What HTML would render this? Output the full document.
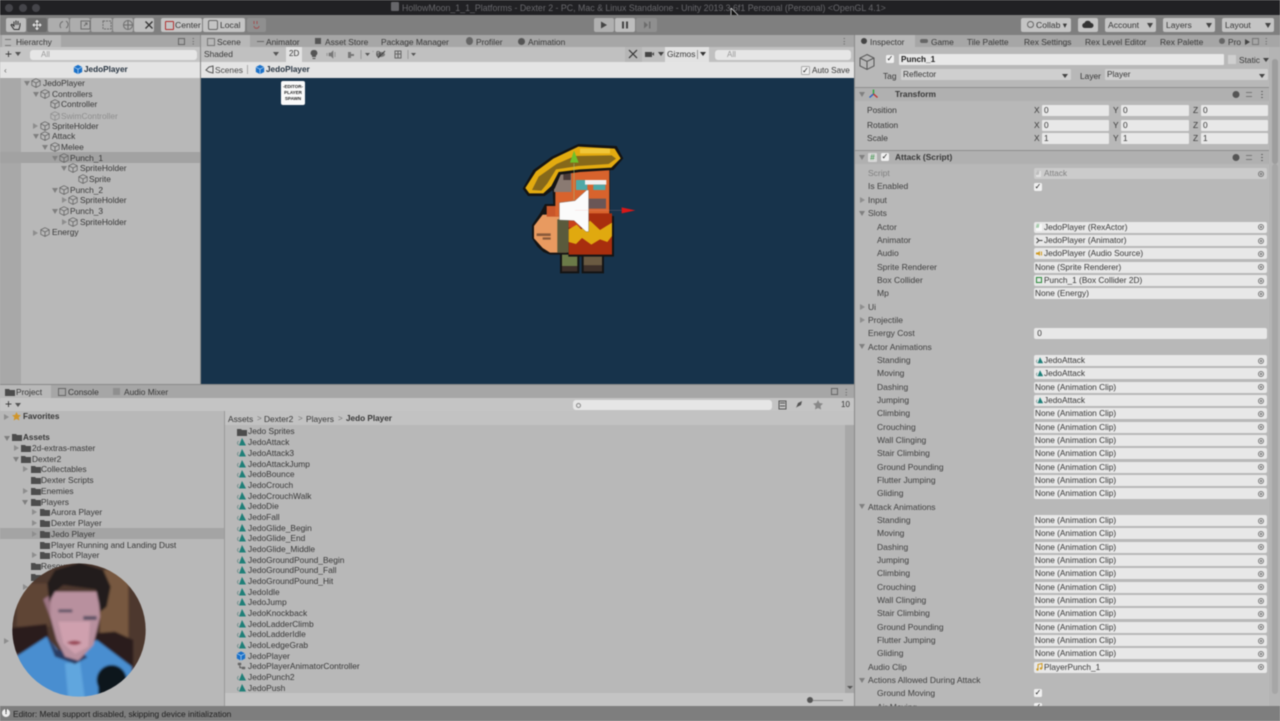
<!DOCTYPE html>
<html><head><meta charset="utf-8"><title>Unity</title>
<style>
html,body{margin:0;padding:0;background:#b8b8b8}
#p{position:relative;width:1280px;height:721px;overflow:hidden;background:#b8b8b8;font-family:"Liberation Sans",sans-serif;font-size:8.4px;color:#383838;filter:blur(.4px)}
#p div,#p span,#p svg{position:absolute}
.t{white-space:nowrap;line-height:12px;height:12px}
.b{background:#c4c4c4;border-radius:2px;height:14px;top:18px;line-height:14px;text-align:center;font-size:8.6px;color:#383838}
.tab{top:36px;line-height:12px;white-space:nowrap;font-size:8.4px;color:#383838}
.r{left:855px;width:415px;height:13px}
.r>span{left:22px;top:0;line-height:13px;white-space:nowrap;font-size:8.5px;color:#3f3f3f}
.r>span.h{left:13px}
.r>i{position:absolute;left:179px;top:1px;width:233px;height:11px;background:#e8e8e8;border-radius:2px;font-style:normal;font-size:8.3px;line-height:11px;padding-left:1px;box-sizing:border-box;white-space:nowrap;color:#383838}
.r>i.o::after{content:"";position:absolute;right:3px;top:2.5px;width:4px;height:4px;border:1px solid #777;border-radius:50%;background:radial-gradient(circle,#777 35%,transparent 45%)}
.r>i.s{padding-left:10px}
.inp{background:#e8e8e8;height:11px;border-radius:1px;line-height:11px;font-size:8.3px;padding-left:2px;box-sizing:border-box}
.ck{width:8px;height:8px;background:#f0f0f0;border-radius:1.5px;font-size:8px;line-height:8px;text-align:center;color:#222}
.tri{width:0;height:0;border-left:3px solid transparent;border-right:3px solid transparent;border-top:5px solid #808080}
.trr{width:0;height:0;border-top:3px solid transparent;border-bottom:3px solid transparent;border-left:5px solid #8e8e8e}
.bd{font-weight:bold;font-size:8.2px}
</style></head><body><div id="p">
<svg width="0" height="0" style="left:0;top:0"><defs>
<symbol id="cube" viewBox="0 0 10 10"><path d="M5 .7 9.2 2.8V7.3L5 9.4.8 7.3V2.8ZM.8 2.8 5 5l4.2-2.2M5 5V9.4" fill="none" stroke="#666" stroke-width=".8"/></symbol>
<symbol id="fo" viewBox="0 0 10 8"><path d="M0 1h4l1 1h5v6H0Z" fill="#4c4c4c"/></symbol>
<symbol id="an" viewBox="0 0 10 8"><path d="M5 0l4 7.500H2Z" fill="#1f7f78"/><path d="M1.500 3 .2 5l1.300 2" fill="none" stroke="#6a8a88" stroke-width=".8"/></symbol>
<symbol id="bl" viewBox="0 0 12 12"><path d="M6 .5 11 3v6L6 11.500 1 9V3Z" fill="#1a70c8"/><path d="M1 3l5 2.600L11 3M6 5.600v5.900" fill="none" stroke="#c8e0f6" stroke-width=".8"/></symbol>
</defs></svg>

<!-- title bar -->
<div style="left:0;top:0;width:1280px;height:15px;background:#212124"></div>
<div style="left:5px;top:4px;width:8px;height:8px;border-radius:50%;background:#45454a"></div>
<div style="left:19px;top:4px;width:8px;height:8px;border-radius:50%;background:#45454a"></div>
<div style="left:32px;top:4px;width:8px;height:8px;border-radius:50%;background:#45454a"></div>
<div class="t" style="left:391px;top:2px;width:8px;height:9px;background:#66666a;border-radius:1px"></div>
<div class="t" style="left:402px;top:2px;font-size:8.800px;color:#68686c">HollowMoon_1_1_Platforms - Dexter 2 - PC, Mac &amp; Linux Standalone - Unity 2019.3.6f1 Personal (Personal) &lt;OpenGL 4.1&gt;</div>
<svg style="left:730px;top:8px" width="10" height="13" viewBox="0 0 10 13"><path d="M1 0v10l2.500-2 1.600 4 1.700-.7-1.600-3.800H8.500Z" fill="#111" stroke="#eee" stroke-width=".7"/></svg>

<!-- toolbar -->
<div style="left:0;top:15px;width:1280px;height:20px;background:#7f7f7f"></div>
<div class="b" style="left:6px;width:20px;background:#bdbdbd"></div>
<div class="b" style="left:27px;width:20px;background:#6a6a6a"></div>
<div class="b" style="left:48px;width:21px;background:#adadad"></div>
<div class="b" style="left:70px;width:20px;background:#adadad"></div>
<div class="b" style="left:91px;width:21px;background:#adadad"></div>
<div class="b" style="left:113px;width:20px;background:#adadad"></div>
<div class="b" style="left:134px;width:20px;background:#bdbdbd"></div>
<svg style="left:6px;top:18px" width="148" height="14" viewBox="0 0 148 14" fill="none" stroke="#333" stroke-width="1"><path d="M8 11.500 5 7l1-.7 2 1.700V3.500M10 7V2.500M12 7V3M14 7.500V5M8 11.500h5l1-4" stroke="#333"/><path d="M31 3v8m-4-4h8m-5.500-3L31 2.500 32.500 4M29.500 10 31 11.500 32.500 10M28.500 5.500 27 7l1.500 1.500M33.500 5.500 35 7l-1.500 1.500" stroke="#e6e6e6"/><path d="M57 3.500a4 4 0 0 0-2 6.500m5-7a4 4 0 0 1 0 7" stroke="#6e6e6e"/><path d="M75 3h9v8h-9ZM78 8l3-3m-2 0h2v2" stroke="#6e6e6e"/><path d="M97 3h8v8h-8Z" stroke="#6e6e6e" stroke-dasharray="2 1"/><circle cx="122" cy="7" r="4.500" stroke="#6e6e6e"/><path d="M117.500 7h9M122 2.500v9" stroke="#6e6e6e"/><path d="M139.500 3.500l7 7m0-7-7 7" stroke-width="1.300"/></svg>
<div class="b" style="left:161px;width:41px;text-align:left;padding-left:14px;box-sizing:border-box">Center</div>
<div class="b" style="left:203px;width:42px;text-align:left;padding-left:17px;box-sizing:border-box">Local</div>
<div style="left:165px;top:21px;width:7px;height:7px;border:1px solid #b03030;border-radius:1px"></div>
<div style="left:208px;top:20px;width:8px;height:8px;border:1px solid #666;border-radius:2px"></div>
<div class="b" style="left:247px;width:19px;background:#8f8f8f"></div>
<svg style="left:252px;top:20px" width="10" height="10" viewBox="0 0 10 10"><path d="M2 1v3m3-3v3M2 6c0 3 5 3 5 0" fill="none" stroke="#a05050"/></svg>
<div class="b" style="left:594px;width:20px;background:#b0b0b0"></div>
<div class="b" style="left:615px;width:20px;background:#bdbdbd"></div>
<div class="b" style="left:636px;width:21px;background:#8f8f8f"></div>
<svg style="left:594px;top:18px" width="63" height="14" viewBox="0 0 63 14"><path d="M7 3.500 13 7 7 10.500Z" fill="#444"/><path d="M28 3.500h2v7h-2ZM32 3.500h2v7h-2Z" fill="#444"/><path d="M50 3.500 54 7l-4 3.500ZM55 3.500h1.500v7H55Z" fill="#6c6c6c"/></svg>
<div class="b" style="left:1021px;width:50px;text-align:left;padding-left:15px;box-sizing:border-box">Collab ▾</div>
<div style="left:1027px;top:21px;width:5px;height:5px;border:1.500px solid #666;border-radius:50%"></div>
<div class="b" style="left:1078px;width:20px"></div>
<svg style="left:1082px;top:20px" width="12" height="9" viewBox="0 0 12 9"><path d="M3 8a2.500 2.500 0 0 1-.5-5 3.500 3.500 0 0 1 6.500 0 2.500 2.500 0 0 1 0 5Z" fill="#333"/></svg>
<div class="b" style="left:1105px;width:51px;text-align:left;padding-left:3px;box-sizing:border-box">Account</div>
<div class="b" style="left:1163px;width:52px;text-align:left;padding-left:3px;box-sizing:border-box">Layers</div>
<div class="b" style="left:1222px;width:52px;text-align:left;padding-left:3px;box-sizing:border-box">Layout</div>
<div class="tri" style="left:1147px;top:23px;border-top-color:#444"></div>
<div class="tri" style="left:1206px;top:23px;border-top-color:#444"></div>
<div class="tri" style="left:1265px;top:23px;border-top-color:#444"></div>

<!-- hierarchy -->
<div style="left:0;top:35px;width:200px;height:12px;background:#a6a6a6"></div>
<div style="left:2px;top:35px;width:59px;height:12px;background:#b8b8b8"></div>
<div class="tab" style="left:16px;top:36px">Hierarchy</div>
<div style="left:5px;top:39px;width:6px;height:5px;border-top:1px solid #777;border-bottom:1px solid #777"></div>
<div style="left:178px;top:38px;width:5px;height:5px;border:1px solid #666"></div>
<div class="t" style="left:189px;top:35px;color:#555">⋮</div>
<div style="left:0;top:47px;width:200px;height:15px;background:#c4c4c4"></div>
<div class="t" style="left:5px;top:48px;font-size:12px;color:#333">+</div>
<div class="tri" style="left:15px;top:52px;border-top-width:4px;border-top-color:#555"></div>
<div style="left:30px;top:50px;width:167px;height:10px;background:#e6e6e6;border-radius:3px"></div>
<div class="t" style="left:41px;top:49px;font-size:8px;color:#999">All</div>
<div style="left:0;top:62px;width:200px;height:16px;background:#e4e4e4"></div>
<div class="t" style="left:4px;top:64px;color:#666">‹</div>
<svg style="left:73px;top:64px" width="10" height="11"><use href="#bl"/></svg>
<div class="t bd" style="left:84px;top:64px;color:#263340">JedoPlayer</div>
<div style="left:0;top:78px;width:21px;height:306px;background:#a8a8a8"></div>
<div style="left:0;top:152px;width:200px;height:11px;background:#a2a2a2"></div>

<div class="t" style="left:43px;top:77px">JedoPlayer</div>
<div class="t" style="left:52px;top:88px">Controllers</div>
<div class="t" style="left:61px;top:98px">Controller</div>
<div class="t" style="left:61px;top:110px;color:#8e8e8e">SwimController</div>
<div class="t" style="left:52px;top:120px">SpriteHolder</div>
<div class="t" style="left:52px;top:130px">Attack</div>
<div class="t" style="left:61px;top:141px">Melee</div>
<div class="t" style="left:70px;top:152px">Punch_1</div>
<div class="t" style="left:80px;top:162px">SpriteHolder</div>
<div class="t" style="left:89px;top:173px">Sprite</div>
<div class="t" style="left:70px;top:184px">Punch_2</div>
<div class="t" style="left:80px;top:194px">SpriteHolder</div>
<div class="t" style="left:70px;top:205px">Punch_3</div>
<div class="t" style="left:80px;top:216px">SpriteHolder</div>
<div class="t" style="left:52px;top:226px">Energy</div>

<svg style="left:31px;top:78px" width="10" height="10"><use href="#cube"/></svg>
<svg style="left:40px;top:89px" width="10" height="10"><use href="#cube"/></svg>
<svg style="left:50px;top:99px" width="10" height="10"><use href="#cube"/></svg>
<svg style="left:50px;top:111px;opacity:.5" width="10" height="10"><use href="#cube"/></svg>
<svg style="left:40px;top:121px" width="10" height="10"><use href="#cube"/></svg>
<svg style="left:40px;top:131px" width="10" height="10"><use href="#cube"/></svg>
<svg style="left:50px;top:142px" width="10" height="10"><use href="#cube"/></svg>
<svg style="left:59px;top:153px" width="10" height="10"><use href="#cube"/></svg>
<svg style="left:68px;top:163px" width="10" height="10"><use href="#cube"/></svg>
<svg style="left:78px;top:174px" width="10" height="10"><use href="#cube"/></svg>
<svg style="left:59px;top:185px" width="10" height="10"><use href="#cube"/></svg>
<svg style="left:68px;top:195px" width="10" height="10"><use href="#cube"/></svg>
<svg style="left:59px;top:206px" width="10" height="10"><use href="#cube"/></svg>
<svg style="left:68px;top:217px" width="10" height="10"><use href="#cube"/></svg>
<svg style="left:40px;top:227px" width="10" height="10"><use href="#cube"/></svg>

<div class="tri" style="left:24px;top:81px"></div>
<div class="tri" style="left:33px;top:92px"></div>
<div class="trr" style="left:33px;top:123px"></div>
<div class="tri" style="left:33px;top:134px"></div>
<div class="tri" style="left:42px;top:145px"></div>
<div class="tri" style="left:52px;top:156px"></div>
<div class="tri" style="left:61px;top:166px"></div>
<div class="tri" style="left:52px;top:188px"></div>
<div class="trr" style="left:62px;top:197px"></div>
<div class="tri" style="left:52px;top:209px"></div>
<div class="trr" style="left:62px;top:219px"></div>
<div class="trr" style="left:33px;top:230px"></div>
<div style="left:200px;top:35px;width:1px;height:350px;background:#8a8a8a"></div>

<!-- scene -->
<div style="left:201px;top:35px;width:653px;height:12px;background:#a6a6a6"></div>
<div style="left:201px;top:35px;width:49px;height:12px;background:#b8b8b8"></div>
<div style="left:207px;top:38px;width:6px;height:6px;border:1px solid #777"></div>
<div class="tab" style="left:217px">Scene</div>
<div class="tab" style="left:266px">Animator</div>
<div style="left:257px;top:41px;width:7px;height:1px;background:#666"></div>
<div style="left:315px;top:38px;width:6px;height:6px;background:#555"></div>
<div class="tab" style="left:325px">Asset Store</div>
<div class="tab" style="left:381px">Package Manager</div>
<div style="left:466px;top:37px;width:7px;height:8px;background:#666;border-radius:50%"></div>
<div class="tab" style="left:476px">Profiler</div>
<div style="left:518px;top:38px;width:7px;height:7px;background:#555;border-radius:50%"></div>
<div class="tab" style="left:528px">Animation</div>
<div class="t" style="left:840px;top:35px;color:#555">⋮</div>
<div style="left:201px;top:47px;width:653px;height:15px;background:#c0c0c0"></div>
<div class="t" style="left:204px;top:48px">Shaded</div>
<div class="tri" style="left:273px;top:52px;border-top-width:4px;border-top-color:#555"></div>
<div style="left:286px;top:47px;width:16px;height:15px;background:#e2e2e2"></div>
<div class="t" style="left:289px;top:48px;font-size:8px">2D</div>
<svg style="left:308px;top:48px" width="120" height="13" viewBox="0 0 120 13"><path d="M6 2a3 3 0 0 1 2 5.500V9H4V7.500A3 3 0 0 1 6 2ZM4.500 10h3v1h-3Z" fill="#555"/><path d="M21 5h2l2-2v7l-2-2h-2ZM27 4v5M19 5v3" fill="#777" stroke="#777" stroke-width=".6"/><path d="M40 4h3v2h3v2h-3v2h-3Z" fill="#777"/><path d="M53 2v9" stroke="#999"/><path d="M57 5h5l-2.500 3Z" fill="#555"/><path d="M65 3v1m4-1v1" stroke="#999"/><ellipse cx="73" cy="6.500" rx="4" ry="2.500" fill="#777"/><path d="M70 10l7-7" stroke="#444"/><path d="M87 3h6v7h-6ZM87 6h6M90 3v7" fill="none" stroke="#666"/><path d="M100 2v9" stroke="#999"/><path d="M103 5h5l-2.500 3Z" fill="#555"/></svg>
<div class="t" style="left:376px;top:48px">0</div>
<div style="left:625px;top:47px;width:17px;height:15px;background:#b6b6b6"></div>
<svg style="left:628px;top:49px" width="10" height="10" viewBox="0 0 10 10"><path d="M1 1l8 8M9 1 1 9" stroke="#333" stroke-width="1.200"/></svg>
<div style="left:645px;top:52px;width:7px;height:5px;background:#444"></div>
<div style="left:652px;top:52px;width:0;height:0;border-top:2.500px solid transparent;border-bottom:2.500px solid transparent;border-right:2.500px solid #444"></div>
<div class="tri" style="left:658px;top:52px;border-top-width:4px;border-top-color:#444"></div>
<div style="left:665px;top:47px;width:44px;height:15px;background:#e2e2e2"></div>
<div class="t" style="left:667px;top:48px">Gizmos</div>
<div style="left:697px;top:50px;width:1px;height:9px;background:#999"></div>
<div class="tri" style="left:700px;top:52px;border-top-width:4px;border-top-color:#333"></div>
<div style="left:715px;top:50px;width:136px;height:10px;background:#e6e6e6;border-radius:3px"></div>
<div class="t" style="left:727px;top:49px;font-size:8px;color:#999">All</div>
<div style="left:201px;top:62px;width:653px;height:16px;background:#e4e4e4"></div>
<div class="t" style="left:215px;top:64px;color:#444">Scenes</div>
<svg style="left:205px;top:65px" width="9" height="9" viewBox="0 0 9 9"><path d="M1 5 4 2l4-1v7l-4-1Z" fill="none" stroke="#555"/></svg>
<div style="left:247px;top:65px;width:1px;height:9px;background:#aaa"></div>
<svg style="left:255px;top:64px" width="10" height="11"><use href="#bl"/></svg>
<div class="t bd" style="left:266px;top:64px;color:#263340">JedoPlayer</div>
<div class="ck" style="left:801px;top:66px;border:1px solid #aaa;box-sizing:border-box;width:9px;height:9px">✓</div>
<div class="t" style="left:812px;top:65px;font-size:8.200px">Auto Save</div>
<div style="left:201px;top:78px;width:653px;height:306px;background:#17334b"></div>
<div style="left:281px;top:81px;width:24px;height:24px;background:#fafafa;border-radius:2px"></div>
<div class="t" style="left:281px;top:84px;width:24px;text-align:center;font-size:4.500px;line-height:6px;height:18px;font-weight:bold;color:#222">-EDITOR-<br>PLAYER<br>SPAWN</div>

<!-- character -->
<svg style="left:500px;top:130px" width="150" height="150" viewBox="0 0 450 450">
<path d="M180 372V430H238V372ZM245 372V430H312V372Z" fill="#141414"/>
<path d="M186 372h46v36h-46Z" fill="#6b7a48"/>
<path d="M251 372h55v34h-55Z" fill="#6a5a42"/>
<path d="M186 408h46v16h-46ZM251 406h55v18h-55Z" fill="#3d302a"/>
<path d="M155 118H330V258H342V380H205V374H150L130 366 112 350 96 325V285L120 250 135 222H160Z" fill="#141414"/>
<path d="M102 288 128 254H200V368H150L128 354 102 325Z" fill="#e89a60"/>
<path d="M140 228h60v32h-60Z" fill="#c8562a"/>
<path d="M110 310h42v8h-42ZM128 322h24v7h-24Z" fill="#8a5a3a"/>
<path d="M172 268h34v100h-34Z" fill="#5a5a3c"/>
<path d="M166 120H328V258H166Z" fill="#d8632d"/>
<path d="M162 122h52v64h-52Z" fill="#8a7a72"/>
<path d="M190 115h22v35h-22Z" fill="#4a3a38"/>
<path d="M228 150h34v30h-34Z" fill="#4fa8a6"/>
<path d="M255 150h64v14h-64Z" fill="#f0f0f0"/>
<path d="M280 164h36v16h-36Z" fill="#4fa8a6"/>
<path d="M262 206h56v30h-56Z" fill="#6a5656"/>
<path d="M206 250h130v124H206Z" fill="#a82e0e"/>
<path d="M206 252h60v40h-60Z" fill="#c8401a"/>
<path d="M206 298l24-14 14 14 26-26 30 28 36-22v40l-14 18-22-8-26 16-28-20-18 18-22-6Z" fill="#e0a90f"/>
<path d="M68 176 100 120 155 80 235 42 350 48 370 85 340 120 240 126 182 134 164 176 134 198 84 198Z" fill="#141414"/>
<path d="M76 174 108 124 160 86 235 50 344 56 362 85 334 113 240 118 176 126 154 168 130 190 88 190Z" fill="#e3ab10"/>
<path d="M96 180 116 140 170 102 225 78 335 76 348 86 326 102 235 108 168 118 142 160 124 182Z" fill="#86681a"/>
<path d="M240 56h90v14h-90Z" fill="#f0c63a"/>
<path d="M222 100V210" stroke="#a0c080" stroke-width="1.500"/>
<path d="M222 62 210 98H236Z" fill="#6fc02a"/>
<path d="M178 218 225 212 260 180 266 180V305L258 305 222 272 178 270Z" fill="#fbfbfb" stroke="#555" stroke-width="1"/>
<path d="M225 241H365" stroke="#e8a0a0" stroke-width="1" opacity=".5"/>
<path d="M365 232 406 241 365 250Z" fill="#d81818"/>
</svg>

<!-- project -->
<div style="left:0;top:384px;width:854px;height:1px;background:#8a8a8a"></div>
<div style="left:0;top:385px;width:854px;height:13px;background:#a6a6a6"></div>
<div style="left:0;top:385px;width:51px;height:13px;background:#b8b8b8"></div>
<svg style="left:5px;top:388px" width="10" height="8"><use href="#fo"/></svg>
<div class="tab" style="left:16px;top:386px">Project</div>
<div style="left:58px;top:388px;width:6px;height:6px;border:1px solid #666"></div>
<div class="tab" style="left:68px;top:386px">Console</div>
<div style="left:113px;top:388px;width:7px;height:7px;background:#8f8f8f"></div>
<div class="tab" style="left:124px;top:386px">Audio Mixer</div>
<div style="left:831px;top:388px;width:5px;height:5px;border:1px solid #666"></div>
<div class="t" style="left:842px;top:386px;color:#555">⋮</div>
<div style="left:0;top:398px;width:854px;height:13px;background:#c4c4c4"></div>
<div class="t" style="left:5px;top:398px;font-size:12px;color:#333">+</div>
<div class="tri" style="left:15px;top:403px;border-top-width:4px;border-top-color:#555"></div>
<div style="left:573px;top:400px;width:199px;height:10px;background:#e6e6e6;border-radius:3px"></div>
<div style="left:576px;top:403px;width:3px;height:3px;border:1px solid #888;border-radius:50%"></div>
<svg style="left:778px;top:400px" width="72" height="10" viewBox="0 0 72 10"><path d="M1 1h7v8H1ZM2 3h5M2 6h5" fill="none" stroke="#555"/><path d="M18 8l2-5 4-2-1 4-4 2Z" fill="#555"/><path d="M40 0l1.500 3 3.500.5-2.500 2.500.6 3.500L40 8l-3 1.500.6-3.500L35 3.500 38.500 3Z" fill="#888"/></svg>
<div class="t" style="left:841px;top:399px;font-size:8px">10</div>

<div style="left:0;top:411px;width:225px;height:295px;background:#b8b8b8"></div>
<div style="left:224px;top:411px;width:1px;height:295px;background:#9a9a9a"></div>
<div style="left:225px;top:411px;width:629px;height:14px;background:#c2c2c2"></div>
<div class="t" style="left:228px;top:413px">Assets</div>
<div class="t" style="left:257px;top:413px;color:#777;font-size:8px">&gt;</div>
<div class="t" style="left:264px;top:413px">Dexter2</div>
<div class="t" style="left:298px;top:413px;color:#777;font-size:8px">&gt;</div>
<div class="t" style="left:306px;top:413px">Players</div>
<div class="t" style="left:338px;top:413px;color:#777;font-size:8px">&gt;</div>
<div class="t bd" style="left:346px;top:413px">Jedo Player</div>
<div style="left:0;top:528px;width:224px;height:11px;background:#a4a4a4"></div>

<div class="trr" style="left:4px;top:414px"></div>
<div class="t bd" style="left:23px;top:411px">Favorites</div>
<svg style="left:12px;top:412px" width="9" height="9" viewBox="0 0 10 10"><path d="M5 0l1.500 3.200 3.500.4-2.600 2.300.8 3.500L5 7.600 1.800 9.400l.8-3.500L0 3.600l3.500-.4Z" fill="#d0952a"/></svg>
<div class="tri" style="left:4px;top:436px"></div>
<svg style="left:12px;top:433px" width="10" height="8"><use href="#fo"/></svg>
<div class="t bd" style="left:23px;top:432px">Assets</div>
<div class="trr" style="left:14px;top:445px"></div>
<svg style="left:21px;top:444px" width="10" height="8"><use href="#fo"/></svg>
<div class="t" style="left:32px;top:442px">2d-extras-master</div>
<div class="tri" style="left:13px;top:457px"></div>
<svg style="left:21px;top:455px" width="10" height="8"><use href="#fo"/></svg>
<div class="t" style="left:32px;top:453px">Dexter2</div>
<div class="trr" style="left:23px;top:466px"></div>
<svg style="left:31px;top:465px" width="10" height="8"><use href="#fo"/></svg>
<div class="t" style="left:41px;top:463px">Collectables</div>
<svg style="left:31px;top:476px" width="10" height="8"><use href="#fo"/></svg>
<div class="t" style="left:41px;top:474px">Dexter Scripts</div>
<div class="trr" style="left:23px;top:488px"></div>
<svg style="left:31px;top:487px" width="10" height="8"><use href="#fo"/></svg>
<div class="t" style="left:41px;top:485px">Enemies</div>
<div class="tri" style="left:22px;top:500px"></div>
<svg style="left:31px;top:498px" width="10" height="8"><use href="#fo"/></svg>
<div class="t" style="left:41px;top:496px">Players</div>
<div class="trr" style="left:32px;top:509px"></div>
<svg style="left:40px;top:508px" width="10" height="8"><use href="#fo"/></svg>
<div class="t" style="left:51px;top:506px">Aurora Player</div>
<div class="trr" style="left:32px;top:520px"></div>
<svg style="left:40px;top:519px" width="10" height="8"><use href="#fo"/></svg>
<div class="t" style="left:51px;top:517px">Dexter Player</div>
<div class="trr" style="left:32px;top:531px"></div>
<svg style="left:40px;top:530px" width="10" height="8"><use href="#fo"/></svg>
<div class="t" style="left:51px;top:528px">Jedo Player</div>
<svg style="left:40px;top:541px" width="10" height="8"><use href="#fo"/></svg>
<div class="t" style="left:51px;top:539px">Player Running and Landing Dust</div>
<div class="trr" style="left:32px;top:552px"></div>
<svg style="left:40px;top:551px" width="10" height="8"><use href="#fo"/></svg>
<div class="t" style="left:51px;top:549px">Robot Player</div>
<svg style="left:31px;top:562px" width="10" height="8"><use href="#fo"/></svg>
<div class="t" style="left:41px;top:560px">Resources</div>
<svg style="left:31px;top:573px" width="10" height="8"><use href="#fo"/></svg>
<div class="trr" style="left:23px;top:584px"></div>
<div class="trr" style="left:4px;top:638px"></div>

<!-- project file list -->
<svg style="left:237px;top:428px" width="10" height="8"><use href="#fo"/></svg>
<div class="t" style="left:248px;top:425px">Jedo Sprites</div>
<svg style="left:237px;top:438px" width="10" height="8"><use href="#an"/></svg><div class="t" style="left:248px;top:436px">JedoAttack</div>
<svg style="left:237px;top:449px" width="10" height="8"><use href="#an"/></svg><div class="t" style="left:248px;top:447px">JedoAttack3</div>
<svg style="left:237px;top:460px" width="10" height="8"><use href="#an"/></svg><div class="t" style="left:248px;top:458px">JedoAttackJump</div>
<svg style="left:237px;top:470px" width="10" height="8"><use href="#an"/></svg><div class="t" style="left:248px;top:468px">JedoBounce</div>
<svg style="left:237px;top:481px" width="10" height="8"><use href="#an"/></svg><div class="t" style="left:248px;top:479px">JedoCrouch</div>
<svg style="left:237px;top:492px" width="10" height="8"><use href="#an"/></svg><div class="t" style="left:248px;top:490px">JedoCrouchWalk</div>
<svg style="left:237px;top:502px" width="10" height="8"><use href="#an"/></svg><div class="t" style="left:248px;top:500px">JedoDie</div>
<svg style="left:237px;top:513px" width="10" height="8"><use href="#an"/></svg><div class="t" style="left:248px;top:511px">JedoFall</div>
<svg style="left:237px;top:524px" width="10" height="8"><use href="#an"/></svg><div class="t" style="left:248px;top:522px">JedoGlide_Begin</div>
<svg style="left:237px;top:534px" width="10" height="8"><use href="#an"/></svg><div class="t" style="left:248px;top:532px">JedoGlide_End</div>
<svg style="left:237px;top:545px" width="10" height="8"><use href="#an"/></svg><div class="t" style="left:248px;top:543px">JedoGlide_Middle</div>
<svg style="left:237px;top:556px" width="10" height="8"><use href="#an"/></svg><div class="t" style="left:248px;top:554px">JedoGroundPound_Begin</div>
<svg style="left:237px;top:566px" width="10" height="8"><use href="#an"/></svg><div class="t" style="left:248px;top:564px">JedoGroundPound_Fall</div>
<svg style="left:237px;top:577px" width="10" height="8"><use href="#an"/></svg><div class="t" style="left:248px;top:575px">JedoGroundPound_Hit</div>
<svg style="left:237px;top:588px" width="10" height="8"><use href="#an"/></svg><div class="t" style="left:248px;top:586px">JedoIdle</div>
<svg style="left:237px;top:598px" width="10" height="8"><use href="#an"/></svg><div class="t" style="left:248px;top:596px">JedoJump</div>
<svg style="left:237px;top:609px" width="10" height="8"><use href="#an"/></svg><div class="t" style="left:248px;top:607px">JedoKnockback</div>
<svg style="left:237px;top:620px" width="10" height="8"><use href="#an"/></svg><div class="t" style="left:248px;top:618px">JedoLadderClimb</div>
<svg style="left:237px;top:630px" width="10" height="8"><use href="#an"/></svg><div class="t" style="left:248px;top:628px">JedoLadderIdle</div>
<svg style="left:237px;top:641px" width="10" height="8"><use href="#an"/></svg><div class="t" style="left:248px;top:639px">JedoLedgeGrab</div>
<svg style="left:236px;top:651px" width="10" height="10"><use href="#bl"/></svg><div class="t" style="left:248px;top:650px">JedoPlayer</div>
<svg style="left:237px;top:662px" width="9" height="8" viewBox="0 0 9 8"><path d="M1 1h3v2H1ZM5 5h3v2H5ZM2.500 3v3H5" fill="#666" stroke="#666" stroke-width=".5"/></svg><div class="t" style="left:248px;top:660px">JedoPlayerAnimatorController</div>
<svg style="left:237px;top:673px" width="10" height="8"><use href="#an"/></svg><div class="t" style="left:248px;top:671px">JedoPunch2</div>
<svg style="left:237px;top:684px" width="10" height="8"><use href="#an"/></svg><div class="t" style="left:248px;top:682px">JedoPush</div>
<div style="left:845px;top:425px;width:9px;height:268px;background:#a8a8a8"></div>
<div style="left:225px;top:693px;width:629px;height:13px;background:#c4c4c4"></div>
<div style="left:807px;top:697px;width:6px;height:6px;border-radius:50%;background:#555"></div>
<div style="left:813px;top:699.500px;width:30px;height:1px;background:#8a8a8a"></div>
<div class="tri" style="left:847px;top:686px;border-top-width:3px;border-top-color:#555"></div>

<!-- inspector -->
<div style="left:854px;top:35px;width:1px;height:671px;background:#8a8a8a"></div>
<div style="left:855px;top:35px;width:425px;height:12px;background:#a6a6a6"></div>
<div style="left:855px;top:35px;width:60px;height:12px;background:#b8b8b8"></div>
<div style="left:861px;top:38px;width:6px;height:6px;background:#444;border-radius:50%"></div>
<div class="tab" style="left:870px">Inspector</div>
<div style="left:920px;top:39px;width:8px;height:4px;background:#666;border-radius:2px"></div>
<div class="tab" style="left:931px">Game</div>
<div class="tab" style="left:967px">Tile Palette</div>
<div class="tab" style="left:1024px">Rex Settings</div>
<div class="tab" style="left:1085px">Rex Level Editor</div>
<div class="tab" style="left:1160px">Rex Palette</div>
<div style="left:1219px;top:38px;width:6px;height:6px;background:#666;border-radius:50%"></div>
<div class="tab" style="left:1228px">Pro</div>
<div class="trr" style="left:1245px;top:39px;border-left-color:#444"></div>
<div style="left:1252px;top:38px;width:5px;height:5px;border:1px solid #777"></div>
<div class="t" style="left:1262px;top:35px;color:#555">⋮</div>

<svg style="left:859px;top:53px" width="18" height="20" viewBox="0 0 18 20"><path d="M8 1.500 15 5v8l-7 3.500L1 13V5ZM1 5l7 3.500L15 5M8 8.500v8" fill="none" stroke="#555" stroke-width="1"/></svg>
<div class="ck" style="left:886px;top:55px">✓</div>
<div class="inp" style="left:899px;top:54px;width:325px;font-weight:bold;font-size:8.200px;color:#222">Punch_1</div>
<div style="left:1228px;top:55px;width:8px;height:9px;background:#cfcfcf"></div>
<div class="t" style="left:1239px;top:54px">Static</div>
<div class="tri" style="left:1263px;top:58px;border-top-width:4px;border-top-color:#444"></div>
<div class="t" style="left:883px;top:70px">Tag</div>
<div class="inp" style="left:901px;top:69px;width:170px;background:#cfcfcf">Reflector</div>
<div class="tri" style="left:1062px;top:74px;border-top-width:4px;border-top-color:#444"></div>
<div class="t" style="left:1080px;top:70px">Layer</div>
<div class="inp" style="left:1105px;top:69px;width:163px;background:#cfcfcf">Player</div>
<div class="tri" style="left:1259px;top:74px;border-top-width:4px;border-top-color:#444"></div>

<div style="left:855px;top:87px;width:414px;height:1px;background:#8f8f8f"></div>
<div style="left:855px;top:88px;width:414px;height:13px;background:#b0b0b0"></div>
<div class="tri" style="left:859px;top:92px"></div>
<svg style="left:868px;top:88px" width="11" height="12" viewBox="0 0 11 12"><path d="M5.500 6V1.500" stroke="#2aa53a" stroke-width="1.400"/><path d="M5.500 6 1.500 9.500" stroke="#2a60c0" stroke-width="1.400"/><path d="M5.500 6 9.500 9.500" stroke="#c03030" stroke-width="1.400"/></svg>
<div class="t bd" style="left:895px;top:88px;font-size:8.400px">Transform</div>

<div class="t" style="left:867px;top:104px">Position</div>
<div class="t" style="left:867px;top:119px">Rotation</div>
<div class="t" style="left:867px;top:132px">Scale</div>
<div class="t" style="left:1034px;top:104px">X</div><div class="inp" style="left:1042px;top:105px;width:67px">0</div>
<div class="t" style="left:1113px;top:104px">Y</div><div class="inp" style="left:1121px;top:105px;width:68px">0</div>
<div class="t" style="left:1193px;top:104px">Z</div><div class="inp" style="left:1201px;top:105px;width:67px">0</div>
<div class="t" style="left:1034px;top:119px">X</div><div class="inp" style="left:1042px;top:120px;width:67px">0</div>
<div class="t" style="left:1113px;top:119px">Y</div><div class="inp" style="left:1121px;top:120px;width:68px">0</div>
<div class="t" style="left:1193px;top:119px">Z</div><div class="inp" style="left:1201px;top:120px;width:67px">0</div>
<div class="t" style="left:1034px;top:132px">X</div><div class="inp" style="left:1042px;top:133px;width:67px">1</div>
<div class="t" style="left:1113px;top:132px">Y</div><div class="inp" style="left:1121px;top:133px;width:68px">1</div>
<div class="t" style="left:1193px;top:132px">Z</div><div class="inp" style="left:1201px;top:133px;width:67px">1</div>

<div style="left:855px;top:150px;width:414px;height:1px;background:#8f8f8f"></div>
<div style="left:855px;top:151px;width:414px;height:13px;background:#b0b0b0"></div>
<div class="tri" style="left:859px;top:155px"></div>
<div style="left:868px;top:153px;width:9px;height:9px;background:#d8d8d8;border-radius:1px;color:#2a8a3a;font-size:8px;line-height:9px;text-align:center">#</div>
<div class="ck" style="left:881px;top:153px">✓</div>
<div class="t bd" style="left:895px;top:151px;font-size:8.400px">Attack (Script)</div>
<svg style="left:1232px;top:90px" width="36" height="9" viewBox="0 0 36 9"><circle cx="4" cy="4.500" r="3.500" fill="#555"/><path d="M14 2.500h6M14 6.500h6" stroke="#777"/><path d="M30 1v1m0 2v1m0 2v1" stroke="#555" stroke-width="1.400"/></svg>
<svg style="left:1232px;top:153px" width="36" height="9" viewBox="0 0 36 9"><circle cx="4" cy="4.500" r="3.500" fill="#555"/><path d="M14 2.500h6M14 6.500h6" stroke="#777"/><path d="M30 1v1m0 2v1m0 2v1" stroke="#555" stroke-width="1.400"/></svg>

<div class="r" style="top:167px"><span class="h" style="color:#808080">Script</span><i class="o s" style="background:#cbcbcb;color:#808080">Attack</i></div>
<div class="r" style="top:180px"><span class="h">Is Enabled</span></div>
<div class="ck" style="left:1034px;top:183px">✓</div>
<div class="r" style="top:194px"><span class="h">Input</span></div><div class="trr" style="left:860px;top:197px"></div>
<div class="r" style="top:207px"><span class="h">Slots</span></div><div class="tri" style="left:859px;top:211px"></div>
<div class="r" style="top:220.500px"><span>Actor</span><i class="o s">JedoPlayer (RexActor)</i></div>
<div class="r" style="top:234px"><span>Animator</span><i class="o s">JedoPlayer (Animator)</i></div>
<div class="r" style="top:247px"><span>Audio</span><i class="o s">JedoPlayer (Audio Source)</i></div>
<div class="r" style="top:260.500px"><span>Sprite Renderer</span><i class="o">None (Sprite Renderer)</i></div>
<div class="r" style="top:274px"><span>Box Collider</span><i class="o s">Punch_1 (Box Collider 2D)</i></div>
<div class="r" style="top:287px"><span>Mp</span><i class="o">None (Energy)</i></div>
<div class="r" style="top:300.500px"><span class="h">Ui</span></div><div class="trr" style="left:860px;top:304px"></div>
<div class="r" style="top:314px"><span class="h">Projectile</span></div><div class="trr" style="left:860px;top:317px"></div>
<div class="r" style="top:327px"><span class="h">Energy Cost</span><i>&nbsp;0</i></div>
<div class="r" style="top:340.500px"><span class="h">Actor Animations</span></div><div class="tri" style="left:859px;top:344px"></div>
<div class="r" style="top:354px"><span>Standing</span><i class="o s">JedoAttack</i></div>
<div class="r" style="top:367px"><span>Moving</span><i class="o s">JedoAttack</i></div>
<div class="r" style="top:380.500px"><span>Dashing</span><i class="o">None (Animation Clip)</i></div>
<div class="r" style="top:394px"><span>Jumping</span><i class="o s">JedoAttack</i></div>
<div class="r" style="top:407px"><span>Climbing</span><i class="o">None (Animation Clip)</i></div>
<div class="r" style="top:420.500px"><span>Crouching</span><i class="o">None (Animation Clip)</i></div>
<div class="r" style="top:434px"><span>Wall Clinging</span><i class="o">None (Animation Clip)</i></div>
<div class="r" style="top:447px"><span>Stair Climbing</span><i class="o">None (Animation Clip)</i></div>
<div class="r" style="top:460.500px"><span>Ground Pounding</span><i class="o">None (Animation Clip)</i></div>
<div class="r" style="top:474px"><span>Flutter Jumping</span><i class="o">None (Animation Clip)</i></div>
<div class="r" style="top:487px"><span>Gliding</span><i class="o">None (Animation Clip)</i></div>
<div class="r" style="top:500.500px"><span class="h">Attack Animations</span></div><div class="tri" style="left:859px;top:504px"></div>
<div class="r" style="top:514px"><span>Standing</span><i class="o">None (Animation Clip)</i></div>
<div class="r" style="top:527px"><span>Moving</span><i class="o">None (Animation Clip)</i></div>
<div class="r" style="top:540.500px"><span>Dashing</span><i class="o">None (Animation Clip)</i></div>
<div class="r" style="top:554px"><span>Jumping</span><i class="o">None (Animation Clip)</i></div>
<div class="r" style="top:567px"><span>Climbing</span><i class="o">None (Animation Clip)</i></div>
<div class="r" style="top:580.500px"><span>Crouching</span><i class="o">None (Animation Clip)</i></div>
<div class="r" style="top:594px"><span>Wall Clinging</span><i class="o">None (Animation Clip)</i></div>
<div class="r" style="top:607px"><span>Stair Climbing</span><i class="o">None (Animation Clip)</i></div>
<div class="r" style="top:620.500px"><span>Ground Pounding</span><i class="o">None (Animation Clip)</i></div>
<div class="r" style="top:634px"><span>Flutter Jumping</span><i class="o">None (Animation Clip)</i></div>
<div class="r" style="top:647px"><span>Gliding</span><i class="o">None (Animation Clip)</i></div>
<div class="r" style="top:660.500px"><span class="h">Audio Clip</span><i class="o s">PlayerPunch_1</i></div>
<div class="r" style="top:674px"><span class="h">Actions Allowed During Attack</span></div><div class="tri" style="left:859px;top:678px"></div>
<div class="r" style="top:687px"><span>Ground Moving</span></div>
<div class="ck" style="left:1034px;top:689px">✓</div>
<div class="r" style="top:700.500px"><span>Air Moving</span></div>
<div class="ck" style="left:1034px;top:703px">✓</div>

<!-- field mini icons -->
<div style="left:1036px;top:171px;width:5px;height:6px;background:#e0e0e0;color:#888;font-size:6px;line-height:6px">#</div>
<div style="left:1036px;top:224px;width:6px;height:7px;background:#f8f8f8;color:#2a8a3a;font-size:6px;line-height:7px">#</div>
<svg style="left:1036px;top:237px" width="7" height="7" viewBox="0 0 7 7"><path d="M.5 1 3 3.500.5 6M3 3.500h3.500" fill="none" stroke="#444"/></svg>
<svg style="left:1036px;top:250px" width="7" height="7" viewBox="0 0 7 7"><path d="M0 2.500h2L4 1v5L2 4.500H0Z" fill="#d09a20"/><path d="M5.500 1.500v4" stroke="#d09a20"/></svg>
<div style="left:1036px;top:277px;width:4px;height:4px;border:1.500px solid #2a8a3a;background:#e8e8e8"></div>
<svg style="left:1036px;top:357px" width="8" height="7"><use href="#an"/></svg>
<svg style="left:1036px;top:370px" width="8" height="7"><use href="#an"/></svg>
<svg style="left:1036px;top:397px" width="8" height="7"><use href="#an"/></svg>
<svg style="left:1036px;top:663px" width="7" height="8" viewBox="0 0 7 8"><path d="M2 6.500V1.500L6 .5v5" fill="none" stroke="#d09a20"/><circle cx="1.500" cy="6.500" r="1.200" fill="#d09a20"/><circle cx="5" cy="5.500" r="1.200" fill="#d09a20"/></svg>

<!-- inspector scrollbar -->
<div style="left:1269px;top:47px;width:11px;height:659px;background:#b4b4b4"></div>
<div style="left:1272px;top:59px;width:6px;height:105px;background:#9d9d9d;border-radius:3px"></div>
<div style="left:1272px;top:164px;width:6px;height:530px;background:#a6a6a6;border-radius:3px"></div>

<!-- status -->
<div style="left:0;top:706px;width:1280px;height:15px;background:#7e7e7e"></div>
<div style="left:2px;top:709px;width:8px;height:8px;background:#eee;border-radius:50%;color:#333;font-size:7px;line-height:8px;text-align:center;font-weight:bold">!</div>
<div class="t" style="left:13px;top:708px;color:#1e1e1e">Editor: Metal support disabled, skipping device initialization</div>

<!-- webcam -->
<svg style="left:0;top:550px" width="200" height="171" viewBox="0 0 600 513">
<defs><clipPath id="cc"><circle cx="237" cy="240" r="200"/></clipPath><filter id="bf" x="-10%" y="-10%" width="120%" height="120%"><feGaussianBlur stdDeviation="3"/></filter></defs>
<g clip-path="url(#cc)"><g filter="url(#bf)">
<rect x="20" y="20" width="440" height="440" fill="#4e382e"/>
<path d="M50 100h100v130H50Z" fill="#5e4436"/>
<path d="M300 60h85v260h-85Z" fill="#77593f"/>
<path d="M20 235 140 222 150 300 70 315 20 300Z" fill="#2b1a1a"/>
<path d="M280 250 345 245 400 270 400 350 330 330 280 300Z" fill="#2b1d1a"/>
<path d="M400 120h50v240h-50Z" fill="#4e382e"/>
<path d="M40 325 140 260 190 320 290 270 395 350 400 460H30Z" fill="#4a8ed0"/>
<path d="M195 340 240 335 255 450H205Z" fill="#60a6de"/>
<path d="M140 258 165 320 225 342 262 322 240 300 170 300Z" fill="#2a3a60"/>
<path d="M155 125 295 125 300 200 280 285 235 332 195 320 170 270 148 190Z" fill="#b8909e"/>
<path d="M130 148 152 205 150 135Z" fill="#9c7482"/>
<path d="M175 215 270 215 265 290 225 312 190 280Z" fill="#cfa0ae"/>
<path d="M175 178h42v9h-42ZM250 198h40v12h-40Z" fill="#5e5266"/>
<path d="M200 278q25-12 45 0q-20 14-45 0Z" fill="#9a4a58"/>
<path d="M148 155 142 100 165 60 240 38 310 60 332 110 320 170 302 185 288 118 190 105 165 125Z" fill="#211a1c"/>
<ellipse cx="335" cy="390" rx="45" ry="45" fill="#10141f"/>
<path d="M295 390h40v60h-40Z" fill="#10141f"/>
</g></g>
</svg>
</div></body></html>
